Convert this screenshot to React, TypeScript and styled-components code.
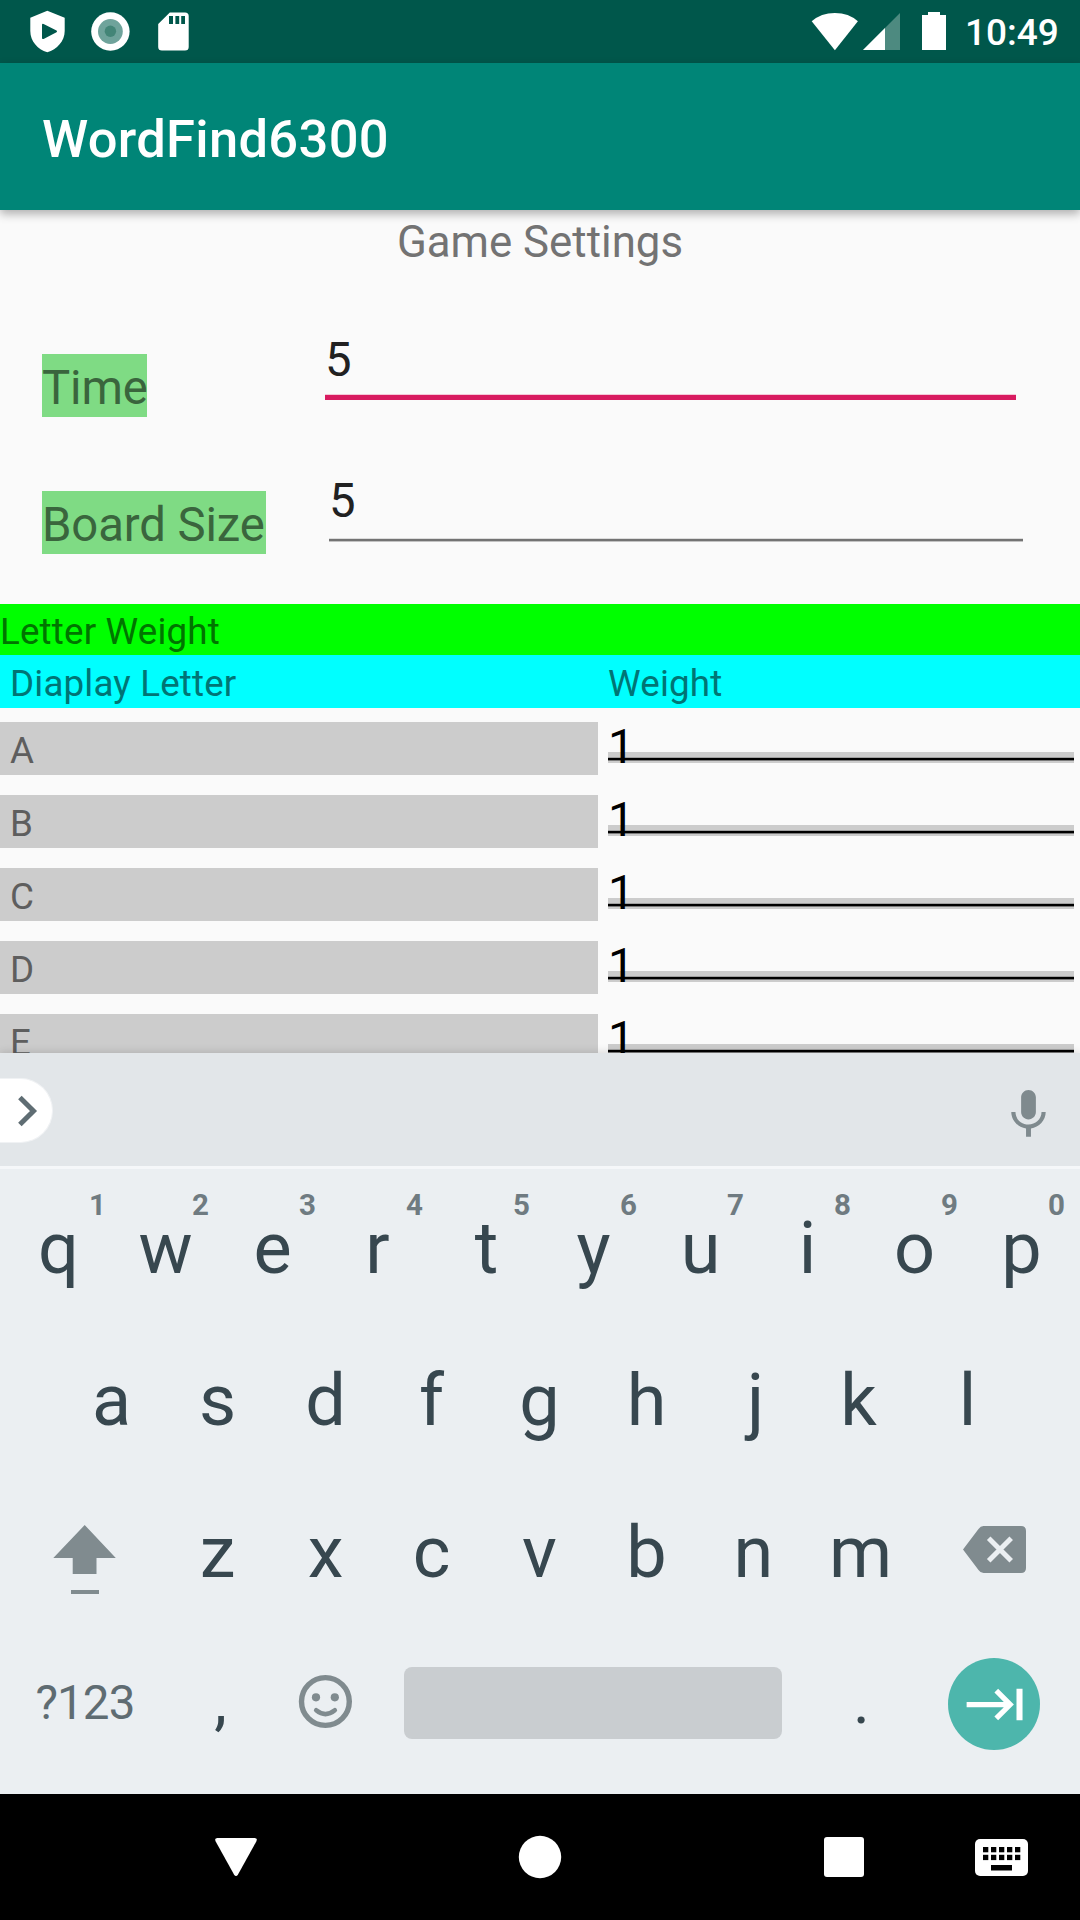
import React from "react";
import styled, { createGlobalStyle } from "styled-components";

const GlobalStyle = createGlobalStyle`
  * { box-sizing: border-box; }
  body { margin: 0; background: #fafafa; }
`;

const Screen = styled.div`
  display: flex;
  flex-direction: column;
  width: 1080px;
  height: 1920px;
  overflow: hidden;
  background: #fafafa;
  font-family: Roboto, "Noto Sans", sans-serif;
`;

const StatusBar = styled.header`
  display: flex;
  justify-content: space-between;
  flex: none;
  height: 63px;
  background: #00574b;
`;

const StatusGroup = styled.div`
  display: flex;
  height: 63px;
`;

const Clock = styled.span`
  width: 115px;
  line-height: 66px;
  font-size: 37px;
  font-weight: 500;
  color: #fff;
`;

const AppBar = styled.div`
  flex: none;
  height: 147px;
  padding: 5px 42px 0;
  background: #008577;
  box-shadow: 0 4px 9px rgba(0, 0, 0, 0.3);
  z-index: 1;
`;

const AppTitle = styled.h1`
  margin: 0;
  font-size: 52.5px;
  font-weight: 500;
  line-height: 142px;
  letter-spacing: 0.3px;
  color: #fff;
`;

const Content = styled.main`
  display: flex;
  flex-direction: column;
  flex: none;
  height: 843px;
  overflow: hidden;
`;

const Heading = styled.h2`
  flex: none;
  margin: 0;
  height: 64px;
  line-height: 64px;
  font-size: 43.8px;
  font-weight: 400;
  text-align: center;
  color: #737373;
`;

const FieldRow = styled.div<{ $height: number }>`
  display: flex;
  align-items: flex-start;
  flex: none;
  height: ${(p) => p.$height}px;
  padding-left: 42px;
`;

const FieldLabel = styled.label<{ $top: number; $width: number; $gap: number }>`
  flex: none;
  width: ${(p) => p.$width}px;
  height: 63px;
  margin: ${(p) => p.$top}px ${(p) => p.$gap}px 0 0;
  padding-top: 4px;
  line-height: 60px;
  font-size: 47.25px;
  letter-spacing: -0.1px;
  white-space: nowrap;
  background: #7fdb84;
  color: #3a653d;
`;

const Field = styled.div<{ $top: number; $width: number; $gap: number }>`
  display: flex;
  flex-direction: column;
  gap: ${(p) => p.$gap}px;
  width: ${(p) => p.$width}px;
  margin-top: ${(p) => p.$top}px;
`;

const FieldValue = styled.span`
  height: 60px;
  line-height: 60px;
  font-size: 47.25px;
  color: #212121;
`;

const Underline = styled.div<{ $focused?: boolean }>`
  height: ${(p) => (p.$focused ? 6 : 4)}px;
  background: ${(p) => (p.$focused ? "#d81b60" : "#737373")};
  border-top: 1px solid ${(p) => (p.$focused ? "#f5c8d7" : "#dcdcdc")};
  border-bottom: ${(p) => (p.$focused ? "none" : "1px solid #c2c2c2")};
`;

const SectionBar = styled.div`
  flex: none;
  height: 51px;
  padding-top: 4px;
  line-height: 47px;
  font-size: 36.75px;
  letter-spacing: 0.17px;
  background: #00ff00;
  color: #007500;
`;

const TableHead = styled.div`
  display: grid;
  grid-template-columns: 598px 1fr;
  flex: none;
  height: 53px;
  padding-top: 5px;
  line-height: 47px;
  font-size: 36.75px;
  letter-spacing: 0.17px;
  background: #00ffff;
  color: #007575;
`;

const HeadCell = styled.span`
  padding-left: 10px;
`;

const TableBody = styled.div`
  display: flex;
  flex-direction: column;
  flex: none;
  gap: 20px;
  padding-top: 14px;
`;

const TableRow = styled.div`
  display: flex;
  gap: 10px;
  height: 53px;
`;

const LetterCell = styled.div`
  width: 598px;
  height: 53px;
  padding: 5px 0 0 10px;
  line-height: 47px;
  font-size: 36.75px;
  background: #cccccc;
  color: #5e5e5e;
`;

const WeightCell = styled.div`
  width: 466px;
  height: 41px;
  line-height: 50px;
  font-size: 47.25px;
  color: #000;
  background: linear-gradient(
    transparent 30px,
    #cccccc 30px 35px,
    #a0a0a0 35px 36px,
    #000 36px 38px,
    #7a7a7a 38px 39px,
    #cccccc 39px
  );
`;

const Keyboard = styled.section`
  display: flex;
  flex-direction: column;
  flex: none;
  height: 741px;
  background: #ebeff2;
  box-shadow: 0 -1px 8px rgba(0, 0, 0, 0.14);
  z-index: 1;
`;

const SuggestionBar = styled.div`
  display: flex;
  align-items: flex-start;
  justify-content: space-between;
  flex: none;
  height: 116px;
  padding: 25px 22px 0 0;
  background: #e2e6e9;
  border-bottom: 3px solid #f5f7f9;
`;

const ExpandChip = styled.div`
  width: 53px;
  height: 65px;
  border-radius: 0 33px 33px 0;
  background: #fff;
  border: 1px solid #f0f2f4;
  border-left: none;
`;

const VoiceButton = styled.div`
  display: flex;
  margin-top: 7px;
`;

const KeyRows = styled.div`
  padding-top: 3px;
`;

const KeyRow = styled.div<{ $inset?: number }>`
  display: flex;
  flex: none;
  height: 152px;
  padding-left: ${(p) => p.$inset ?? 5}px;
`;

const Key = styled.div<{ $width?: number; $nudge?: number }>`
  position: relative;
  flex: none;
  width: ${(p) => p.$width ?? 107}px;
  height: 152px;
  line-height: 153px;
  font-size: 72px;
  text-align: center;
  text-indent: ${(p) => (p.$nudge ?? 0) * 2}px;
  color: #37474f;
`;

const Punctuation = styled(Key)`
  line-height: 148px;
  font-size: 64px;
`;

const ModeKey = styled(Key)`
  line-height: 150px;
  font-size: 47.5px;
  letter-spacing: -0.9px;
  color: #5f6c72;
`;

const IconKey = styled(Key)`
  display: flex;
  align-items: center;
  justify-content: center;
`;

const Hint = styled.span<{ $right: number }>`
  position: absolute;
  top: 18px;
  right: ${(p) => p.$right}px;
  line-height: 30px;
  font-size: 29.5px;
  font-weight: 700;
  text-indent: 0;
  color: #6f7b81;
`;

const SpaceBar = styled.div`
  width: 378px;
  height: 72px;
  margin: 39px 25px 0;
  border-radius: 8px;
  background: #c9cdd0;
`;

const EnterButton = styled.div`
  display: flex;
  align-items: center;
  justify-content: center;
  width: 92px;
  height: 92px;
  padding-left: 3px;
  border-radius: 50%;
  background: #4db6ac;
`;

const NavBar = styled.nav`
  display: flex;
  align-items: center;
  flex: none;
  height: 126px;
  padding-left: 214px;
  background: #000;
`;

const NavButton = styled.div<{ $gap: number }>`
  display: flex;
  margin-right: ${(p) => p.$gap}px;
`;

const WEIGHTS = [
  { letter: "A", weight: 1 },
  { letter: "B", weight: 1 },
  { letter: "C", weight: 1 },
  { letter: "D", weight: 1 },
  { letter: "E", weight: 1 },
];

const NUDGES: Record<string, number> = { r: -2, k: -2, f: -1, s: -1, j: 2, z: -1, c: -1 };

const NotificationIcons = () => (
  <svg width="200" height="63" viewBox="0 0 200 63">
    <path
      fill="#fff"
      fillRule="evenodd"
      d="M47.3 10.7L64.7 17.7V31C64.7 41 57 49.500 47.300 52.300C37.600 49.500 30.300 41 30.300 31V17.700ZM42 25V38Q42 39.600 43.600 38.900L56.500 32.300Q57.800 31.400 56.500 30.600L43.600 23.900Q42 23.300 42 25Z"
    />
    <circle cx="110.400" cy="31.500" r="19.200" fill="#fff" />
    <circle cx="110.400" cy="31.500" r="12.400" fill="#6fa39b" />
    <circle cx="110.400" cy="31.300" r="5.700" fill="#438577" />
    <path
      fill="#fff"
      fillRule="evenodd"
      d="M169.800 12.500H185Q188.700 12.500 188.700 16V47Q188.700 50.500 185 50.500H162Q158.200 50.500 158.200 47V24ZM169 16V24H173V16ZM175.400 16V24H179.200V16ZM181.200 16V24H185V16Z"
    />
  </svg>
);

const SystemIcons = () => (
  <svg width="155" height="63" viewBox="810 0 155 63">
    <path fill="#fff" d="M834.900 50.200L811.700 21.300Q821 13 834.900 13T857.900 21.300Z" />
    <path fill="#4d8a80" d="M900 13V50H863Z" />
    <path fill="#fff" d="M885 28V50H863Z" />
    <path fill="#fff" d="M922 15H928V12H940V15H946V50H922Z" />
  </svg>
);

const ChevronIcon = () => (
  <svg width="52" height="64" viewBox="0 1079 52 64">
    <path fill="none" stroke="#5f6d73" strokeWidth="5" d="M19.900 1097.500L33.500 1111L19.900 1124.500" />
  </svg>
);

const MicIcon = () => (
  <svg width="59" height="59" viewBox="0 0 24 24">
    <path
      fill="#7f8a8e"
      d="M12 14c1.660 0 3-1.340 3-3V5c0-1.660-1.340-3-3-3S9 3.340 9 5v6c0 1.660 1.340 3 3 3zm5.300-3c0 3-2.540 5.100-5.300 5.100S6.700 14 6.700 11H5c0 3.410 2.720 6.230 6 6.720V21h2v-3.280c3.280-.48 6-3.300 6-6.720h-1.700z"
    />
  </svg>
);

const ShiftIcon = () => (
  <svg width="160" height="152" viewBox="5 1476 160 152">
    <path fill="#808b8f" d="M84.700 1525L115.800 1558H96.500V1574H72.700V1558H53.300Z" />
    <path fill="#808b8f" d="M71 1590H99V1594H71Z" />
  </svg>
);

const BackspaceIcon = () => (
  <svg width="160" height="152" viewBox="914 1476 160 152">
    <path
      fill="#808b8f"
      d="M983.500 1526H1021Q1026 1526 1026 1531V1568Q1026 1573 1021 1573H983.500Q980.500 1573 978.500 1570L963 1549.500L978.500 1529Q980.500 1526 983.500 1526Z"
    />
    <path stroke="#ebeff2" strokeWidth="5" d="M988.700 1538.200L1011.200 1560.800M1011.200 1538.200L988.700 1560.800" />
  </svg>
);

const SmileyIcon = () => (
  <svg width="107" height="152" viewBox="272 1628 107 152">
    <g fill="none" stroke="#808b8f">
      <circle cx="325.400" cy="1701.500" r="23.900" strokeWidth="5.400" />
      <path strokeWidth="4.600" strokeLinecap="round" d="M316.200 1710.300Q325.400 1717.800 334.800 1710.300" />
    </g>
    <circle cx="316" cy="1697.300" r="4.100" fill="#808b8f" />
    <circle cx="334.800" cy="1697.300" r="4.100" fill="#808b8f" />
  </svg>
);

const TabIcon = () => (
  <svg width="63" height="63" viewBox="0 0 24 24">
    <path
      fill="#fff"
      d="M11.590 7.410L15.170 11H1v2h14.170l-3.590 3.590L13 18l6-6-6-6-1.410 1.410zM20 6v12h2.300V6h-2.300z"
    />
  </svg>
);

const BackIcon = () => (
  <svg width="44" height="40" viewBox="0 0 44 40">
    <path fill="#fff" d="M3.500 1H40.500Q44 1 42.300 4.500L24 37.500Q22 40.500 20 37.500L1.700 4.500Q0 1 3.500 1Z" />
  </svg>
);

const HomeIcon = () => (
  <svg width="44" height="44" viewBox="0 0 44 44">
    <circle cx="22" cy="22" r="21.200" fill="#fff" />
  </svg>
);

const RecentsIcon = () => (
  <svg width="40" height="40" viewBox="0 0 40 40">
    <rect width="40" height="40" rx="3" fill="#fff" />
  </svg>
);

const KEY_COLUMNS = [8, 16, 24, 32, 40];

const KeyboardIcon = () => (
  <svg width="53" height="38" viewBox="0 0 53 38">
    <rect y="1" width="53" height="37" rx="5" fill="#fff" />
    {KEY_COLUMNS.map((x) => (
      <React.Fragment key={x}>
        <rect x={x} y="9" width="5.300" height="5.300" />
        <rect x={x} y="16.800" width="5.300" height="5.300" />
      </React.Fragment>
    ))}
    <rect x="16" y="27" width="21" height="5.500" />
  </svg>
);

export default function App() {
  return (
    <Screen>
      <GlobalStyle />
      <StatusBar>
        <StatusGroup>
          <NotificationIcons />
        </StatusGroup>
        <StatusGroup>
          <SystemIcons />
          <Clock>10:49</Clock>
        </StatusGroup>
      </StatusBar>
      <AppBar>
        <AppTitle>WordFind6300</AppTitle>
      </AppBar>
      <Content>
        <Heading>Game Settings</Heading>
        <FieldRow $height={180}>
          <FieldLabel $top={80} $width={105} $gap={178}>Time</FieldLabel>
          <Field $top={56} $width={691} $gap={4}>
            <FieldValue>5</FieldValue>
            <Underline $focused />
          </Field>
        </FieldRow>
        <FieldRow $height={150}>
          <FieldLabel $top={37} $width={224} $gap={63}>Board Size</FieldLabel>
          <Field $top={17} $width={694} $gap={7}>
            <FieldValue>5</FieldValue>
            <Underline />
          </Field>
        </FieldRow>
        <SectionBar>Letter Weight</SectionBar>
        <TableHead>
          <HeadCell>Diaplay Letter</HeadCell>
          <HeadCell>Weight</HeadCell>
        </TableHead>
        <TableBody>
          {WEIGHTS.map(({ letter, weight }) => (
            <TableRow key={letter}>
              <LetterCell>{letter}</LetterCell>
              <WeightCell>{weight}</WeightCell>
            </TableRow>
          ))}
        </TableBody>
      </Content>
      <Keyboard>
        <SuggestionBar>
          <ExpandChip>
            <ChevronIcon />
          </ExpandChip>
          <VoiceButton>
            <MicIcon />
          </VoiceButton>
        </SuggestionBar>
        <KeyRows>
          <KeyRow>
            {"qwertyuiop".split("").map((k, i) => (
              <Key key={k} $nudge={NUDGES[k]}>
                {k}
                <Hint $right={i === 0 ? 6 : 10}>{(i + 1) % 10}</Hint>
              </Key>
            ))}
          </KeyRow>
          <KeyRow $inset={58}>
            {"asdfghjkl".split("").map((k) => (
              <Key key={k} $nudge={NUDGES[k]}>{k}</Key>
            ))}
          </KeyRow>
          <KeyRow>
            <IconKey $width={160}>
              <ShiftIcon />
            </IconKey>
            {"zxcvbnm".split("").map((k) => (
              <Key key={k} $nudge={NUDGES[k]}>{k}</Key>
            ))}
            <IconKey $width={160}>
              <BackspaceIcon />
            </IconKey>
          </KeyRow>
          <KeyRow>
            <ModeKey $width={160}>?123</ModeKey>
            <Punctuation $nudge={2}>,</Punctuation>
            <IconKey>
              <SmileyIcon />
            </IconKey>
            <SpaceBar />
            <Punctuation $nudge={1}>.</Punctuation>
            <IconKey $width={160}>
              <EnterButton>
                <TabIcon />
              </EnterButton>
            </IconKey>
          </KeyRow>
        </KeyRows>
      </Keyboard>
      <NavBar>
        <NavButton $gap={260}>
          <BackIcon />
        </NavButton>
        <NavButton $gap={262}>
          <HomeIcon />
        </NavButton>
        <NavButton $gap={111}>
          <RecentsIcon />
        </NavButton>
        <NavButton $gap={0}>
          <KeyboardIcon />
        </NavButton>
      </NavBar>
    </Screen>
  );
}
